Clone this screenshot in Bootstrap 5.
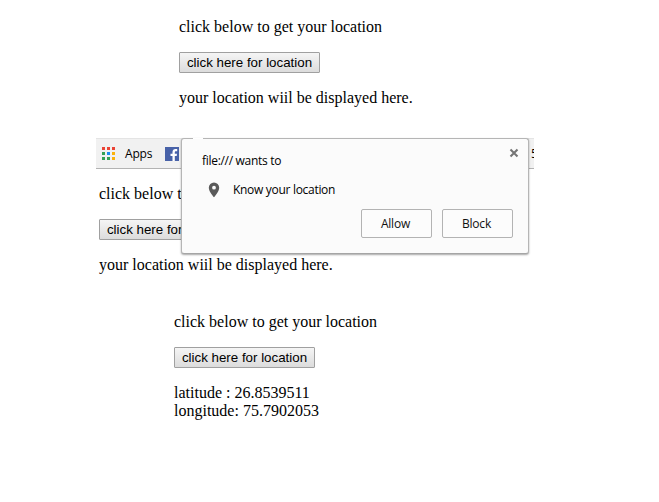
<!DOCTYPE html>
<html lang="en">
<head>
<meta charset="utf-8">
<meta name="viewport" content="width=device-width, initial-scale=1">
<title>Get your location</title>
<link href="https://cdn.jsdelivr.net/npm/bootstrap@5.3.0/dist/css/bootstrap.min.css" rel="stylesheet">
<style>
body{font:16px/18px "Liberation Serif","Times New Roman",serif;color:#000;background:#fff;height:502px;overflow:hidden}
.demo{gap:16px}
.demo-first{padding:18px 0 0 179px}
.demo-second{padding:16px 0 0 3px}
.demo-third{padding:39px 0 0 174px}
.native-btn{width:141px;height:21px;padding:0;border:1px solid #a0a0a0;border-radius:1px;background:linear-gradient(#f5f5f5,#dcdcdc);font:13.33px/19px "Liberation Sans",Arial,sans-serif;color:#000}
.browser{width:438px;margin:31px 0 0 96px}
.bookmarks{height:31px;background:#f1f1f1;border-top:1px solid #e4e4e4;border-bottom:1px solid #b3b3b3}
.ui-text{font:12px/16px "Open Sans","Noto Sans",sans-serif}
.apps-icon{margin-left:6px}
.apps-label{margin-left:10px;width:40px;letter-spacing:-.2px}
.cut-label{width:3px;overflow:hidden}
.prompt{left:85px;top:0;width:348px;height:116px;background:#fbfbfb;border:1px solid #b5b5b5;border-bottom-color:#a5a5a5;border-radius:3px;box-shadow:0 1px 2px rgba(0,0,0,.35);padding:14px 15px 0 20px;letter-spacing:-.3px}
.prompt-notch{left:11px;top:-1px;width:10px;height:1px;background:#fff}
.prompt-close{right:9px;top:9px}
.prompt-row{margin-top:13px;gap:13px;padding-left:6px}
.prompt-actions{margin-top:11px;gap:10px}
.prompt-btn{width:71px;height:29px;padding:0 2px 0 0;border:1px solid #b3b3b3;border-radius:2px;background:#fcfcfc;color:#111;letter-spacing:-.2px}
</style>
<script src="https://cdn.jsdelivr.net/npm/bootstrap@5.3.0/dist/js/bootstrap.bundle.min.js"></script>
</head>
<body>
<section class="demo demo-first d-flex flex-column align-items-start">
  <p class="m-0">click below to get your location</p>
  <button class="native-btn" type="button">click here for location</button>
  <p class="m-0">your location wiil be displayed here.</p>
</section>

<section class="browser position-relative">
  <div class="bookmarks ui-text d-flex align-items-center">
    <svg class="apps-icon" width="13" height="13" shape-rendering="crispEdges" aria-hidden="true">
      <path fill="#ea4335" d="M0 0h3v3H0zM5 0h3v3H5zM10 0h3v3h-3z"/>
      <path fill="#34a055" d="M0 5h3v3H0zM0 10h3v3H0zM5 10h3v3H5z"/>
      <path fill="#1a8cf0" d="M5 5h3v3H5z"/>
      <path fill="#fbb10a" d="M10 5h3v3h-3zM10 10h3v3h-3z"/>
    </svg>
    <span class="apps-label">Apps</span>
    <svg width="14" height="14" aria-hidden="true"><path fill="#4862a8" d="M0 0h14v14H0z"/><path fill="#fff" d="M7.5 14V9H5.5V6.8h2V5c0-2 1.2-3 3-3h1.7v2.2H11c-.9 0-1.2.4-1.2 1.1v1.5H12L11.7 9H9.8v5z"/></svg>
    <span class="cut-label ms-auto">5</span>
  </div>
  <div class="demo demo-second d-flex flex-column align-items-start">
    <p class="m-0">click below to get your location</p>
    <button class="native-btn" type="button">click here for location</button>
    <p class="m-0">your location wiil be displayed here.</p>
  </div>
  <div class="prompt ui-text position-absolute" role="dialog" aria-label="Location permission">
    <span class="prompt-notch position-absolute"></span>
    <svg class="prompt-close position-absolute" width="10" height="10" aria-hidden="true"><path d="M1.5 1.5l7 7M8.5 1.5l-7 7" stroke="#757575" stroke-width="2.1"/></svg>
    <div>file:/// wants to</div>
    <div class="prompt-row d-flex align-items-center">
      <svg width="12" height="16" viewBox="0 0 12 16" aria-hidden="true"><path fill="#5a5a5a" fill-rule="evenodd" d="M6 .5A5.2 5.2 0 0 0 .8 5.7C.8 9.6 6 15.3 6 15.3s5.2-5.7 5.2-9.6A5.2 5.2 0 0 0 6 .5zm0 3.3a1.9 1.9 0 1 1 0 3.8 1.9 1.9 0 0 1 0-3.8z"/></svg>
      <span>Know your location</span>
    </div>
    <div class="prompt-actions d-flex justify-content-end">
      <button class="prompt-btn ui-text" type="button">Allow</button>
      <button class="prompt-btn ui-text" type="button">Block</button>
    </div>
  </div>
</section>

<section class="demo demo-third d-flex flex-column align-items-start">
  <p class="m-0">click below to get your location</p>
  <button class="native-btn" type="button">click here for location</button>
  <p class="m-0">latitude : 26.8539511<br>longitude: 75.7902053</p>
</section>
</body>
</html>
